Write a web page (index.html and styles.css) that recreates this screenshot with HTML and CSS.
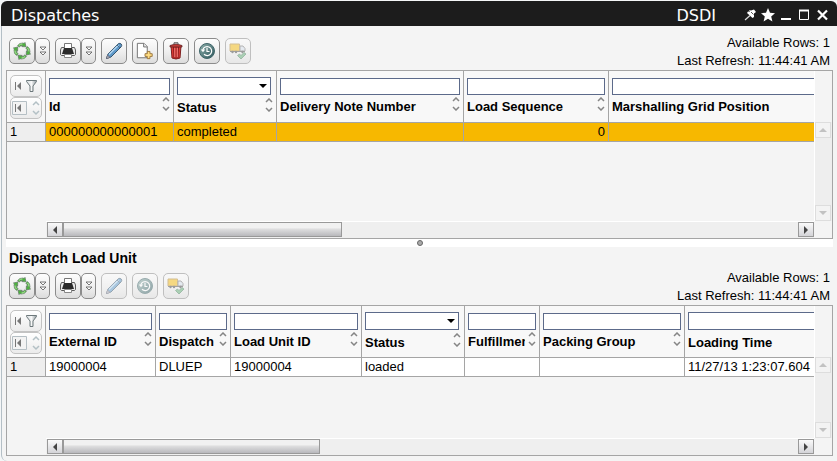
FILE: index.html
```html
<!DOCTYPE html>
<html lang="en">
<head>
<meta charset="utf-8">
<title>Dispatches</title>
<link rel="stylesheet" href="styles.css">
</head>
<body>
<svg class="defs" aria-hidden="true">
  <defs>
    <linearGradient id="steel" x1="0" y1="0" x2="1" y2="1"><stop offset="0" stop-color="#8fb0ab"/><stop offset="1" stop-color="#2c555b"/></linearGradient>
    <linearGradient id="funnel"><stop offset="0" stop-color="#d4dbde"/><stop offset=".5" stop-color="#f8f8f8"/><stop offset="1" stop-color="#8c979b"/></linearGradient>
    <g id="arc" stroke-linejoin="round">
      <path d="M4.500 3.800Q6.500 .6 10 1L11 1.500 12 .4 13 4.800 8.800 4.600 9.800 3.500Q7.800 3 6.300 5Z" fill="#4db53d" stroke="#5f7263" stroke-width=".7"/>
      <path d="M5.800 3.600Q7.500 1.700 9.500 1.900" fill="none" stroke="#c4efb4" stroke-width=".9"/>
    </g>
  </defs>
  <symbol id="recycle" viewBox="0 0 18 18">
    <use href="#arc"/>
    <use href="#arc" transform="rotate(90 9 9)"/>
    <use href="#arc" transform="rotate(180 9 9)"/>
    <use href="#arc" transform="rotate(270 9 9)"/>
  </symbol>
  <symbol id="more" viewBox="0 0 8 10">
    <path d="M1 1h6L4 4ZM1 6h6L4 9Z" fill="#fff" stroke="#555" stroke-width=".8"/>
  </symbol>
  <symbol id="print" viewBox="0 0 18 18">
    <path d="M4 5.500H2.500L1.500 8v4.500l1 1h13l1-1V8l-1-2.500H14Z" fill="#e9e9e9" stroke="#5d5d5d"/>
    <path d="M5.500 1.500h7V7h-7Z" fill="#fff" stroke="#777"/>
    <path d="M5 6h8l2 6H3Z" fill="#2b2b2b"/>
    <path d="M5.500 12.500h7v3h-7Z" fill="#fff" stroke="#888"/>
  </symbol>
  <symbol id="pencil" viewBox="0 0 18 18">
    <path d="M1.500 16.500 3 12 13.200 1.800Q15 .8 16.200 2T16 5L6 15Z" fill="#5d98c9" stroke="#38566f"/>
    <path d="M4 12.500 13.500 3" stroke="#b4d7f0" stroke-width="1.500"/>
    <path d="m1.500 16.500 1-3.200L5 15.400Z" fill="#e1e6e9" stroke="#667"/>
    <path d="m12 3 3 3" stroke="#486b89"/>
  </symbol>
  <symbol id="new" viewBox="0 0 20 18">
    <path d="M1.500.5H9L12.500 4v12.500h-11Z" fill="#fff" stroke="#696969"/>
    <path d="M8.500.5V4.500h4" fill="#eee" stroke="#696969"/>
    <path d="M12.500 9.500h3v2.500H18v3h-2.500v2.500h-3V15H10v-3h2.500Z" fill="#ffdd82" stroke="#967039"/>
  </symbol>
  <symbol id="trash" viewBox="0 0 18 18">
    <path d="M4 4h10l-1 12q-4 2-8 0Z" fill="#e03a35" stroke="#7d2020"/>
    <path d="M6.500 5l.5 11M9 5v12M11.500 5 11 16" stroke="#7c1b1b" stroke-width=".9"/>
    <path d="M7.800 6v9M10.300 6v9" stroke="#ff928c" stroke-width=".8"/>
    <path d="M3 3.500Q9 .5 15 3.500V5H3Z" fill="#c53a35" stroke="#5d2525" stroke-width=".8"/>
    <path d="M7 2V.8h4V2" fill="none" stroke="#555"/>
  </symbol>
  <symbol id="clock" viewBox="0 0 18 18">
    <circle cx="9" cy="9" r="7.500" fill="url(#steel)" stroke="#40666a"/>
    <path d="M4.800 8A4.500 4.500 0 1 1 6 12.300" fill="none" stroke="#fff" stroke-width="1.200"/>
    <path d="M2.700 7.500h4.500L5 10.300Z" fill="#fff"/>
    <path d="M9 6v3.500h2.500" fill="none" stroke="#fff" stroke-width="1.200"/>
  </symbol>
  <symbol id="truck" viewBox="0 0 18 18">
    <path d="M1 2h9.500v7H1Z" fill="#f6bd10" stroke="#b58b35"/>
    <path d="M11 4h3l2 2.500V9h-5Z" fill="#d8e1ed" stroke="#777"/>
    <path d="M1 9.500h15" stroke="#555"/>
    <circle cx="3.500" cy="10" r="1.200" fill="#444"/><circle cx="7" cy="10" r="1.200" fill="#444"/><circle cx="13.500" cy="10" r="1.200" fill="#444"/>
    <path d="m8.500 13.500 2-1.500 1.500 1.500 3-3 2 1.500-5 5Z" fill="#62ae75" stroke="#39744f" stroke-width=".8"/>
  </symbol>
  <symbol id="filter" viewBox="0 0 24 14">
    <path d="M1.500 3v8" stroke="#777"/><path d="M7 3v8L3 7Z" fill="#777"/>
    <path d="M12.500 1.500h10v1L19 7v5.500h-3V7l-3.500-4.500Z" fill="url(#funnel)" stroke="#6d787b"/>
  </symbol>
  <symbol id="firstsort" viewBox="0 0 28 16">
    <path d="M.5 1.500h14v13H.5Z" fill="#f3f3f3" stroke="#b5bfc4"/>
    <path d="M3.500 4v8" stroke="#777"/><path d="M9 4v8L5 8Z" fill="#777"/>
    <path d="m21 5 3-3 3 3M21 11l3 3 3-3" fill="none" stroke="#b3c0c5" stroke-width="1.500"/>
  </symbol>
  <symbol id="sort" viewBox="0 0 8 14">
    <path d="m1 4 3-3 3 3M1 10l3 3 3-3" fill="none" stroke="#858585" stroke-width="1.500"/>
  </symbol>
</svg>
<div class="window">
  <header class="titlebar">
    <h1>Dispatches</h1>
    <span class="code">DSDI</span>
    <button class="wbtn" aria-label="Pin"><svg viewBox="0 0 14 14"><path d="m6 2 2 .5L11 1.500 13 4l-2 1.500V9l-1.500 1L4 5l1-1.500 2 .3Z" fill="#fff"/><path d="M7 7.500 2 12" stroke="#ddd" stroke-width="1.200"/><path d="m8 4 2.500 2.500" stroke="#555"/></svg></button>
    <button class="wbtn" aria-label="Favourite"><svg viewBox="0 0 14 14"><path d="m7 0 2 4.800 5 .4-3.800 3.300 1.200 5L7 10.800 2.600 13.500l1.200-5L0 5.200l5-.4Z" fill="#fff"/></svg></button>
    <button class="wbtn" aria-label="Minimize"><svg viewBox="0 0 14 14"><path d="M2 11h10" stroke="#fff" stroke-width="2"/></svg></button>
    <button class="wbtn" aria-label="Maximize"><svg viewBox="0 0 14 14"><path d="M2.500 2.500h9v9h-9Z" fill="none" stroke="#fff"/><path d="M2 2.500h10" stroke="#fff" stroke-width="2"/></svg></button>
    <button class="wbtn" aria-label="Close"><svg viewBox="0 0 14 14"><path d="m3 2.500 9 9M12 2.500l-9 9" stroke="#fff" stroke-width="2.200"/></svg></button>
  </header>
  <main class="content">
    <div class="head">
      <div class="tools">
        <div class="pair"><button class="tool" aria-label="Refresh"><svg><use href="#recycle"/></svg></button><button class="tool drop" aria-label="Refresh options"><svg><use href="#more"/></svg></button></div>
        <div class="pair"><button class="tool" aria-label="Print"><svg><use href="#print"/></svg></button><button class="tool drop" aria-label="Print options"><svg><use href="#more"/></svg></button></div>
        <button class="tool" aria-label="Edit"><svg><use href="#pencil"/></svg></button>
        <button class="tool" aria-label="New"><svg><use href="#new"/></svg></button>
        <button class="tool" aria-label="Delete"><svg><use href="#trash"/></svg></button>
        <button class="tool" aria-label="History"><svg><use href="#clock"/></svg></button>
        <button class="tool" aria-label="Complete dispatch" disabled><svg><use href="#truck"/></svg></button>
      </div>
      <p class="meta">Available Rows: 1<br>Last Refresh: 11:44:41 AM</p>
    </div>
    <section class="frame" aria-label="Dispatches">
      <div class="view">
        <table>
          <colgroup><col class="c-num"><col class="c-id"><col class="c-status"><col class="c-note"><col class="c-seq"><col class="c-last"></colgroup>
          <thead><tr>
            <th class="corner"><button aria-label="Filter"><svg class="i-filter"><use href="#filter"/></svg></button><button aria-label="Sort"><svg class="i-first"><use href="#firstsort"/></svg></button></th>
            <th><input id="a1" type="text"><div class="cap"><label for="a1">Id</label><svg><use href="#sort"/></svg></div></th>
            <th class="pick"><div class="combo"><select id="a2"><option></option></select><i></i></div><div class="cap"><label for="a2">Status</label><svg><use href="#sort"/></svg></div></th>
            <th><input id="a3" type="text"><div class="cap"><label for="a3">Delivery Note Number</label><svg><use href="#sort"/></svg></div></th>
            <th><input id="a4" type="text"><div class="cap"><label for="a4">Load Sequence</label><svg><use href="#sort"/></svg></div></th>
            <th><input id="a5" type="text"><div class="cap"><label for="a5">Marshalling Grid Position</label></div></th>
          </tr></thead>
          <tbody><tr class="selected"><th scope="row">1</th><td>000000000000001</td><td>completed</td><td></td><td class="num">0</td><td></td></tr></tbody>
        </table>
      </div>
      <div class="vbar"><button class="up" aria-label="Scroll up" disabled></button><button class="down" aria-label="Scroll down" disabled></button></div>
      <div class="hbar"><button class="left" aria-label="Scroll left"></button><div class="track"><div class="thumb wide"></div></div><button class="right" aria-label="Scroll right"></button></div>
    </section>
    <div class="splitter"><i></i></div>
    <div class="head">
      <div class="stack">
        <h2>Dispatch Load Unit</h2>
        <div class="tools">
          <div class="pair"><button class="tool" aria-label="Refresh load units"><svg><use href="#recycle"/></svg></button><button class="tool drop" aria-label="Refresh options"><svg><use href="#more"/></svg></button></div>
          <div class="pair"><button class="tool" aria-label="Print load units"><svg><use href="#print"/></svg></button><button class="tool drop" aria-label="Print options"><svg><use href="#more"/></svg></button></div>
          <button class="tool" aria-label="Edit load unit" disabled><svg><use href="#pencil"/></svg></button>
          <button class="tool" aria-label="Load unit history" disabled><svg><use href="#clock"/></svg></button>
          <button class="tool" aria-label="Complete load unit" disabled><svg><use href="#truck"/></svg></button>
        </div>
      </div>
      <p class="meta">Available Rows: 1<br>Last Refresh: 11:44:41 AM</p>
    </div>
    <section class="frame" aria-label="Dispatch Load Unit">
      <div class="view">
        <table>
          <colgroup><col class="c-num"><col class="c-ext"><col class="c-short"><col class="c-unit"><col class="c-status"><col class="c-short"><col class="c-seq"><col class="c-last"></colgroup>
          <thead><tr>
            <th class="corner"><button aria-label="Filter load units"><svg class="i-filter"><use href="#filter"/></svg></button><button aria-label="Sort load units"><svg class="i-first"><use href="#firstsort"/></svg></button></th>
            <th><input id="b1" type="text"><div class="cap"><label for="b1">External ID</label><svg><use href="#sort"/></svg></div></th>
            <th><input id="b2" type="text"><div class="cap"><label for="b2">Dispatch</label><svg><use href="#sort"/></svg></div></th>
            <th><input id="b3" type="text"><div class="cap"><label for="b3">Load Unit ID</label><svg><use href="#sort"/></svg></div></th>
            <th class="pick"><div class="combo"><select id="b4"><option></option></select><i></i></div><div class="cap"><label for="b4">Status</label><svg><use href="#sort"/></svg></div></th>
            <th><input id="b5" type="text"><div class="cap"><label for="b5">Fulfillment</label><svg><use href="#sort"/></svg></div></th>
            <th><input id="b6" type="text"><div class="cap"><label for="b6">Packing Group</label><svg><use href="#sort"/></svg></div></th>
            <th class="pick"><input id="b7" type="text"><div class="cap"><label for="b7">Loading Time</label></div></th>
          </tr></thead>
          <tbody><tr><th scope="row">1</th><td>19000004</td><td>DLUEP</td><td>19000004</td><td>loaded</td><td></td><td></td><td>11/27/13 1:23:07.604</td></tr></tbody>
        </table>
      </div>
      <div class="vbar"><button class="up" aria-label="Scroll up" disabled></button><button class="down" aria-label="Scroll down" disabled></button></div>
      <div class="hbar"><button class="left" aria-label="Scroll left"></button><div class="track"><div class="thumb"></div></div><button class="right" aria-label="Scroll right"></button></div>
    </section>
  </main>
</div>
</body>
</html>
```
FILE: styles.css
```css
* { box-sizing: border-box; }
body { margin: 0; background: #f4f6f7; color: #000; font: 13px/18px "Liberation Sans", Arial, sans-serif; }
h1, h2, p { margin: 0; }
button { margin: 0; padding: 0; font: inherit; }
svg { display: block; }
.defs { position: absolute; width: 0; height: 0; }

.window { display: flex; flex-direction: column; min-height: 100vh; padding: 1px 0 0 1px; }
.titlebar { display: flex; align-items: center; height: 25px; padding: 5px 6px 0 10px; background: #1c1c1c; color: #fff; border-radius: 6px 6px 0 0; }
.titlebar h1, .code { font: 16px/20px "DejaVu Sans", Verdana, sans-serif; }
.titlebar h1 { margin-right: auto; }
.code { margin-right: 25px; }
.wbtn { width: 18px; height: 20px; border: 0; background: none; display: grid; place-items: start center; }
.wbtn svg { width: 14px; height: 14px; margin-top: 2px; }

.content { flex: 1; display: grid; grid-template-columns: minmax(0, 1fr); grid-template-rows: 44px minmax(120px, 169fr) 8px 58px minmax(120px, 151fr); padding: 0 4px 5px 4px; background: #f4f4f4; border-left: 1px solid #b4bfc6; border-bottom-left-radius: 6px; }
.head { display: flex; justify-content: space-between; align-items: flex-end; padding: 0 3px; }
.tools { display: flex; gap: 5px; padding-bottom: 6px; }
.pair { display: flex; }
.stack h2 { font-size: 14px; line-height: 18px; margin-bottom: 6px; }
.meta { text-align: right; }

.tool { width: 26px; height: 26px; border: 1px solid #8c8c8c; border-radius: 5px; background: linear-gradient(#fdfdfd, #f0f0f0 50%, #dcdcdc); display: grid; place-items: center; }
.tool svg { width: 18px; height: 18px; }
.tool.drop { width: 15px; }
.tool.drop svg { width: 8px; height: 10px; }
.tool:disabled { opacity: .5; }

.frame { display: grid; grid-template: minmax(0, 1fr) 17px / minmax(0, 1fr) 18px; border: 1px solid #a5a5a5; }
.view { overflow: hidden; }
table { width: 1px; min-width: 100%; border-collapse: separate; border-spacing: 0; table-layout: fixed; }
.c-num { width: 39px; }
.c-id { width: 128px; }
.c-status { width: 103px; }
.c-note { width: 187px; }
.c-seq { width: 145px; }
.c-last { width: 260px; }
.c-ext { width: 110px; }
.c-short { width: 75px; }
.c-unit { width: 131px; }
thead th { height: 52px; padding: 7px 3px 0; vertical-align: top; text-align: left; background: #f8f8f8; border-right: 1px solid #a5a5a5; border-bottom: 1px solid #a5a5a5; }
thead th.pick { padding-top: 6px; }
thead th.corner { padding: 4px 3px 0; }
.corner button { width: 32px; height: 22px; border: 1px solid #c3c3c3; border-radius: 5px; background: linear-gradient(#fff, #ebebeb); display: grid; place-items: center; }
.i-filter { width: 24px; height: 14px; }
.i-first { width: 28px; height: 16px; }
th input, select { display: block; width: 100%; height: 17px; margin: 0; padding: 0 2px; border: 1px solid #5c6a8a; border-radius: 0; background: #fff; font: inherit; appearance: none; }
.pick input, select { height: 18px; }
.combo { position: relative; margin-right: 2px; }
.combo i { position: absolute; right: 4px; top: 7px; border: 4px solid transparent; border-top-color: #000; border-bottom: 0; }
.cap { display: flex; padding-top: 2px; }
.pick .cap { padding-top: 3px; }
.cap label { flex: 1; min-width: 0; margin-right: 3px; overflow: hidden; white-space: nowrap; padding-top: 1px; }
.cap svg { flex: none; width: 8px; height: 14px; }
td, tbody th { height: 19px; padding: 0 3px; line-height: 18px; text-align: left; font-weight: normal; white-space: nowrap; background: #fff; border-right: 1px solid #a5a5a5; border-bottom: 1px solid #a5a5a5; }
tbody th { background: #eee; }
.selected td { background: #f7b800; }
td.num { text-align: right; }

.vbar { display: flex; flex-direction: column; justify-content: space-between; padding: 51px 2px 0 0; border-left: 1px solid #fff; background: linear-gradient(#f4f4f4 51px, #eee 51px); }
.hbar { display: flex; padding: 0 0 1px 1px; margin-left: 39px; background: #efefef; border-top: 1px solid #fff; }
.vbar button, .hbar button { flex: none; width: 16px; height: 15px; border: 1px solid #999; background: linear-gradient(#fafafa, #d4d4d8); display: grid; place-items: center; }
.vbar button { border-color: #ddd; background: #f3f3f3; height: 16px; }
.track { flex: 1; }
.thumb { width: 35%; height: 15px; border: 1px solid #999; background: linear-gradient(#f1f1f1 0 35%, #dcdcdd 50%, #b8b8bc); }
.thumb.wide { width: 38%; }
.up::before, .down::before, .left::before, .right::before { content: ""; border: 4px solid transparent; }
.up::before { border-bottom-color: #c2c2c2; border-top: 0; }
.down::before { border-top-color: #c2c2c2; border-bottom: 0; }
.left::before { border-right-color: #444; border-left: 0; }
.right::before { border-left-color: #444; border-right: 0; }

.splitter { background: #fff; display: grid; place-items: center; }
.splitter i { width: 6px; height: 6px; border: 1px solid #666; border-radius: 50%; background: #aaa; }
```
